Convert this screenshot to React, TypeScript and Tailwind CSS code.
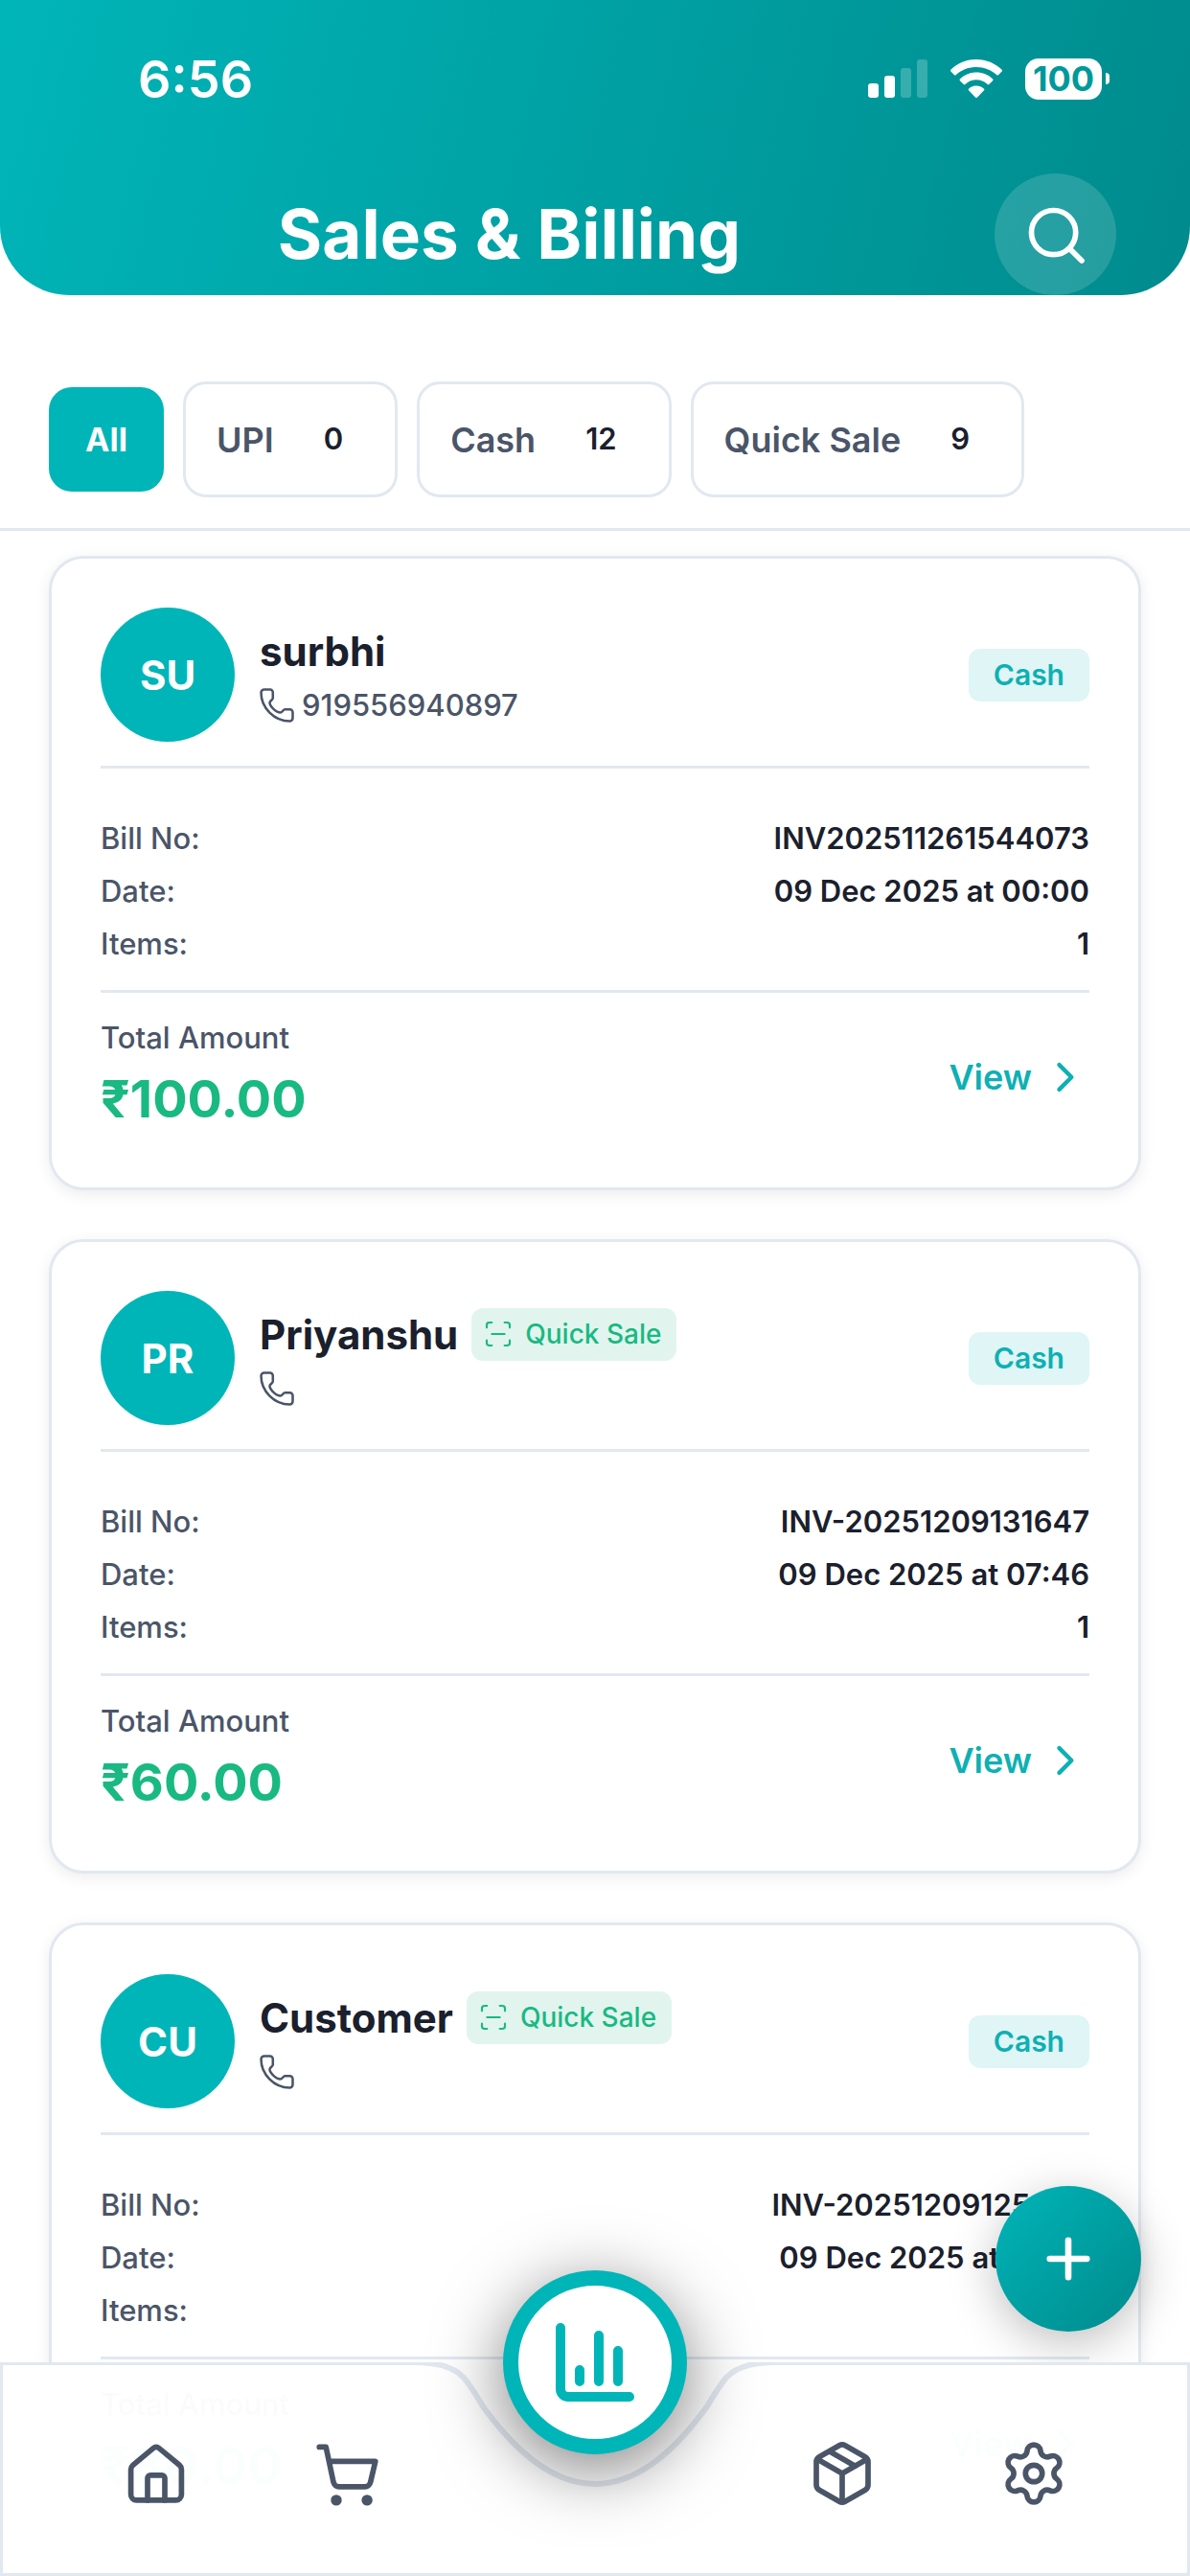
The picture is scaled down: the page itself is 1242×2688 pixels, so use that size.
import React, { useState } from 'react';

type Bill = {
  initials: string;
  name: string;
  phone: string;
  quickSale: boolean;
  billNo: string;
  date: string;
  items: number;
  total: string;
};

const bills: Bill[] = [
  {
    initials: 'SU',
    name: 'surbhi',
    phone: '919556940897',
    quickSale: false,
    billNo: 'INV202511261544073',
    date: '09 Dec 2025 at 00:00',
    items: 1,
    total: '₹100.00',
  },
  {
    initials: 'PR',
    name: 'Priyanshu',
    phone: '',
    quickSale: true,
    billNo: 'INV-20251209131647',
    date: '09 Dec 2025 at 07:46',
    items: 1,
    total: '₹60.00',
  },
  {
    initials: 'CU',
    name: 'Customer',
    phone: '',
    quickSale: true,
    billNo: 'INV-20251209125440',
    date: '09 Dec 2025 at 07:24',
    items: 1,
    total: '₹30.00',
  },
];

const filters = [
  { label: 'All', count: null },
  { label: 'UPI', count: 0 },
  { label: 'Cash', count: 12 },
  { label: 'Quick Sale', count: 9 },
];

const stroke = {
  viewBox: '0 0 24 24',
  fill: 'none',
  stroke: 'currentColor',
  strokeLinecap: 'round' as const,
  strokeLinejoin: 'round' as const,
};

const PhoneIcon = () => (
  <svg {...stroke} strokeWidth="1.7" className="size-9" aria-hidden="true">
    <path d="M1 3.200A2.200 2.200 0 0 1 3.200 1h4a2 2 0 0 1 2 2v4c0 1.200-2.200 1.800-2.200 3.200 0 2.600 4.600 6.800 7.400 6.800 1.400 0 2-2.200 3.200-2.200H21a2 2 0 0 1 2 2v4a2.200 2.200 0 0 1-2.200 2.200C10.200 23 1 13.800 1 3.200Z" />
  </svg>
);

const ScanIcon = () => (
  <svg {...stroke} strokeWidth="1.6" className="size-8" aria-hidden="true">
    <path d="M3 7V5a2 2 0 0 1 2-2h2M17 3h2a2 2 0 0 1 2 2v2M21 17v2a2 2 0 0 1-2 2h-2M7 21H5a2 2 0 0 1-2-2v-2M7 12h10" />
  </svg>
);

const StatusBar = () => (
  <div className="flex h-[164px] items-center justify-between pl-36 pr-[84px]">
    <span className="text-[54px] font-semibold">6:56</span>
    <div className="flex items-center gap-6">
      <svg viewBox="0 0 64 40" className="h-10 w-16" fill="currentColor" aria-hidden="true">
        <rect x="2" y="25" width="11" height="15" rx="3" />
        <rect x="19" y="17" width="11" height="23" rx="3" />
        <rect x="36" y="9" width="11" height="31" rx="3" opacity=".22" />
        <rect x="53" y="0" width="11" height="40" rx="3" opacity=".22" />
      </svg>
      <svg viewBox="0 0 54 40" className="h-10 w-[54px]" fill="currentColor" aria-hidden="true">
        <path d="M27 0C16.500 0 7.200 4.100 .6 10.600a1.500 1.500 0 0 0 0 2.200l3.200 3.200a1.500 1.500 0 0 0 2.100 0C11.400 11 18.800 8 27 8s15.600 3 21.100 8a1.500 1.500 0 0 0 2.100 0l3.200-3.200a1.500 1.500 0 0 0 0-2.200C46.800 4.100 37.500 0 27 0Z" />
        <path d="M27 13.600c-6.600 0-12.500 2.500-16.900 6.600a1.500 1.500 0 0 0 0 2.200l3.400 3.400a1.500 1.500 0 0 0 2.100 0 16.600 16.600 0 0 1 22.800 0 1.500 1.500 0 0 0 2.100 0l3.400-3.400a1.500 1.500 0 0 0 0-2.200c-4.400-4.100-10.300-6.600-16.900-6.600Z" />
        <path d="M27 27.500c-3 0-5.700 1.100-7.800 2.900a1.500 1.500 0 0 0 0 2.200l6.700 6.900a1.500 1.500 0 0 0 2.200 0l6.700-6.900a1.500 1.500 0 0 0 0-2.200c-2.100-1.800-4.800-2.900-7.800-2.900Z" />
      </svg>
      <div className="flex items-center gap-1">
        <span className="flex h-[43px] w-20 items-center justify-center rounded-[14px] bg-white text-[36px] font-bold text-[#00999b]">
          100
        </span>
        <span className="h-3 w-1 rounded-r-full bg-white" />
      </div>
    </div>
  </div>
);

const Row = ({ label, value }: { label: string; value: React.ReactNode }) => (
  <div className="flex h-[55px] items-center justify-between text-[31px]">
    <dt className="font-medium text-[#4a5568]">{label}</dt>
    <dd className="font-semibold text-[#1a202c]">{value}</dd>
  </div>
);

const BillCard = ({ bill }: { bill: Bill }) => (
  <article className="rounded-[36px] border-3 border-[#e2e8f0] bg-white p-[51px] shadow-[0_4px_16px_rgba(0,0,0,0.08)]">
    <div className="flex items-center justify-between border-b-3 border-[#e2e8f0] pb-[25px]">
      <div className="flex items-center gap-[26px]">
        <div className="flex size-[140px] items-center justify-center rounded-full bg-[#00b5b8] text-[42px] font-bold text-white">
          {bill.initials}
        </div>
        <div className="pt-2">
          <div className="flex h-14 items-center gap-3.5">
            <h2 className="text-[42px] font-bold text-[#1a202c]">{bill.name}</h2>
            {bill.quickSale && (
              <span className="flex h-[55px] items-center gap-3 rounded-xl bg-[#e1f5ee] pr-4 pl-3 text-[28px] font-medium text-[#19b982]">
                <ScanIcon />
                Quick Sale
              </span>
            )}
          </div>
          <div className="flex h-[58px] items-center gap-2 text-[31px] font-medium text-[#4a5568]">
            <PhoneIcon />
            {bill.phone}
          </div>
        </div>
      </div>
      <span className="flex h-[55px] items-center rounded-xl bg-[#dff5f6] px-[26px] text-[30px] font-semibold text-[#0eb0b3]">
        Cash
      </span>
    </div>
    <dl className="border-b-3 border-[#e2e8f0] pt-[46px] pb-5">
      <Row label="Bill No:" value={bill.billNo} />
      <Row label="Date:" value={bill.date} />
      <Row label="Items:" value={bill.items} />
    </dl>
    <div className="flex items-center justify-between pt-6">
      <div>
        <p className="text-[31px] leading-[46px] font-medium text-[#4a5568]">Total Amount</p>
        <p className="text-[54px] leading-[82px] font-bold text-[#19b982]">{bill.total}</p>
      </div>
      <button type="button" className="flex items-center gap-3 pr-1 text-[36px] font-semibold text-[#0eb0b3]">
        View
        <svg {...stroke} strokeWidth="2.4" className="size-11" aria-hidden="true">
          <path d="m9 5 7 7-7 7" />
        </svg>
      </button>
    </div>
  </article>
);

const BottomNav = () => (
  <nav className="fixed inset-x-0 bottom-0 flex h-[223px] items-center text-[#4a5568]">
    <div className="absolute inset-0 flex">
      <div className="flex-1 border-3 border-r-0 border-[#e2e8f0] bg-white/98" />
      <svg viewBox="0 0 402 223" className="h-full w-[402px] shrink-0" aria-hidden="true">
        <path
          d="M0 0H12C36 0 54 5 64 16C71 24 78 36 84 46C110 82 150 127 201 127S292 82 318 46C324 36 331 24 338 16C348 5 366 0 390 0H402V223H0Z"
          fill="#fff"
          fillOpacity=".98"
        />
        <path
          d="M0 0H12C36 0 54 5 64 16C71 24 78 36 84 46C110 82 150 127 201 127S292 82 318 46C324 36 331 24 338 16C348 5 366 0 390 0H402M0 223H402"
          fill="none"
          stroke="#e2e8f0"
          strokeWidth="6"
        />
      </svg>
      <div className="flex-1 border-3 border-l-0 border-[#e2e8f0] bg-white/98" />
    </div>
    <div className="relative flex w-full items-center justify-between px-[127px] pt-2">
      <div className="flex gap-32">
        <a href="#home" aria-label="Home">
          <svg {...stroke} strokeWidth="1.900" className="size-[72px]">
            <path d="M3.200 10.600a2 2 0 0 1 .7-1.500L11 3.200a1.600 1.600 0 0 1 2 0l7.100 5.900a2 2 0 0 1 .7 1.500v8.700a2 2 0 0 1-2 2H5.200a2 2 0 0 1-2-2Z" />
            <path d="M9 21.300v-7.700a1 1 0 0 1 1-1h4a1 1 0 0 1 1 1v7.700" />
          </svg>
        </a>
        <a href="#sales" aria-label="Sales">
          <svg {...stroke} strokeWidth="1.900" className="size-[72px]">
            <path d="M2.100 2.800h2.300L7 15a2 2 0 0 0 2 1.600h8.900a2 2 0 0 0 2-1.600l1.700-7.200H5.600" />
            <circle cx="8" cy="21.300" r="1.900" fill="currentColor" stroke="none" />
            <circle cx="18.700" cy="21.300" r="1.900" fill="currentColor" stroke="none" />
          </svg>
        </a>
      </div>
      <div className="flex gap-32">
        <a href="#products" aria-label="Products">
          <svg {...stroke} strokeWidth="1.900" className="size-[72px]">
            <path d="M11 21.730a2 2 0 0 0 2 0l7-4A2 2 0 0 0 21 16V8a2 2 0 0 0-1-1.730l-7-4a2 2 0 0 0-2 0l-7 4A2 2 0 0 0 3 8v8a2 2 0 0 0 1 1.730zM12 22V12M3.300 7 12 12l8.700-5M7.500 4.270l9 5.150" />
          </svg>
        </a>
        <a href="#settings" aria-label="Settings">
          <svg {...stroke} strokeWidth="1.900" className="size-[72px]">
            <path d="M9.671 4.136a2.340 2.340 0 0 1 4.659 0 2.340 2.340 0 0 0 3.319 1.915 2.340 2.340 0 0 1 2.330 4.033 2.340 2.340 0 0 0 0 3.831 2.340 2.340 0 0 1-2.330 4.033 2.340 2.340 0 0 0-3.319 1.915 2.340 2.340 0 0 1-4.659 0 2.340 2.340 0 0 0-3.320-1.915 2.340 2.340 0 0 1-2.330-4.033 2.340 2.340 0 0 0 0-3.831A2.340 2.340 0 0 1 6.350 6.051a2.340 2.340 0 0 0 3.319-1.915" />
            <circle cx="12" cy="12" r="2.900" />
          </svg>
        </a>
      </div>
    </div>
    <a
      href="#dashboard"
      aria-label="Dashboard"
      className="absolute -top-24 left-1/2 flex size-48 -translate-x-1/2 items-center justify-center rounded-full border-16 border-[#00b5b8] bg-white text-[#00b5b8] shadow-[0_16px_72px_rgba(0,0,0,0.5)]"
    >
      <svg {...stroke} strokeWidth="2.500" className="size-24">
        <path d="M3 3v16a2 2 0 0 0 2 2h16M8 17v-3M13 17V5M18 17V9" />
      </svg>
    </a>
  </nav>
);

const App = () => {
  const [active, setActive] = useState('All');

  return (
    <div className="h-screen overflow-hidden bg-white font-[Inter,'Liberation_Sans',sans-serif]">
      <header className="rounded-b-[72px] bg-linear-[104deg] from-[#00b5b8] to-[#008b8d] text-white">
        <StatusBar />
        <div className="flex h-36 items-center px-[77px] pt-[17px]">
          <h1 className="flex-1 pr-[52px] text-center text-[71px] font-bold">Sales &amp; Billing</h1>
          <button
            type="button"
            aria-label="Search"
            className="flex size-[127px] items-center justify-center rounded-full bg-white/15"
          >
            <svg {...stroke} strokeWidth="1.900" className="size-[72px]">
              <circle cx="11.200" cy="11.200" r="7.700" />
              <path d="m16.800 16.800 4.200 4.200" />
            </svg>
          </button>
        </div>
      </header>

      <div className="flex items-center gap-5 border-b-3 border-[#e2e8f0] px-[51px] pt-[90px] pb-8">
        {filters.map(({ label, count }) =>
          count === null ? (
            <button
              key={label}
              type="button"
              aria-pressed={active === label}
              onClick={() => setActive(label)}
              className="h-[109px] w-30 rounded-3xl bg-[#00b5b8] text-[34px] font-bold text-white"
            >
              {label}
            </button>
          ) : (
            <button
              key={label}
              type="button"
              aria-pressed={active === label}
              onClick={() => setActive(label)}
              className="flex h-[121px] items-center rounded-3xl border-3 border-[#e2e8f0] bg-white pr-[54px] pl-8 text-[36px] font-semibold text-[#4a5568]"
            >
              {label}
              <span className="ml-[52px] text-[31px] font-semibold text-[#1a202c]">{count}</span>
            </button>
          ),
        )}
      </div>

      <main className="flex flex-col gap-[51px] px-[51px] pt-[26px]">
        {bills.map((bill) => (
          <BillCard key={bill.billNo} bill={bill} />
        ))}
      </main>

      <button
        type="button"
        aria-label="New bill"
        className="fixed right-[51px] bottom-[255px] flex size-[152px] items-center justify-center rounded-full bg-linear-135 from-[#00b5b8] to-[#008b8d] text-white shadow-[0_12px_48px_rgba(0,0,0,0.25)]"
      >
        <svg {...stroke} strokeWidth="2.400" className="size-[66px]">
          <path d="M12 5v14M5 12h14" />
        </svg>
      </button>
      <BottomNav />
    </div>
  );
};

export default App;
